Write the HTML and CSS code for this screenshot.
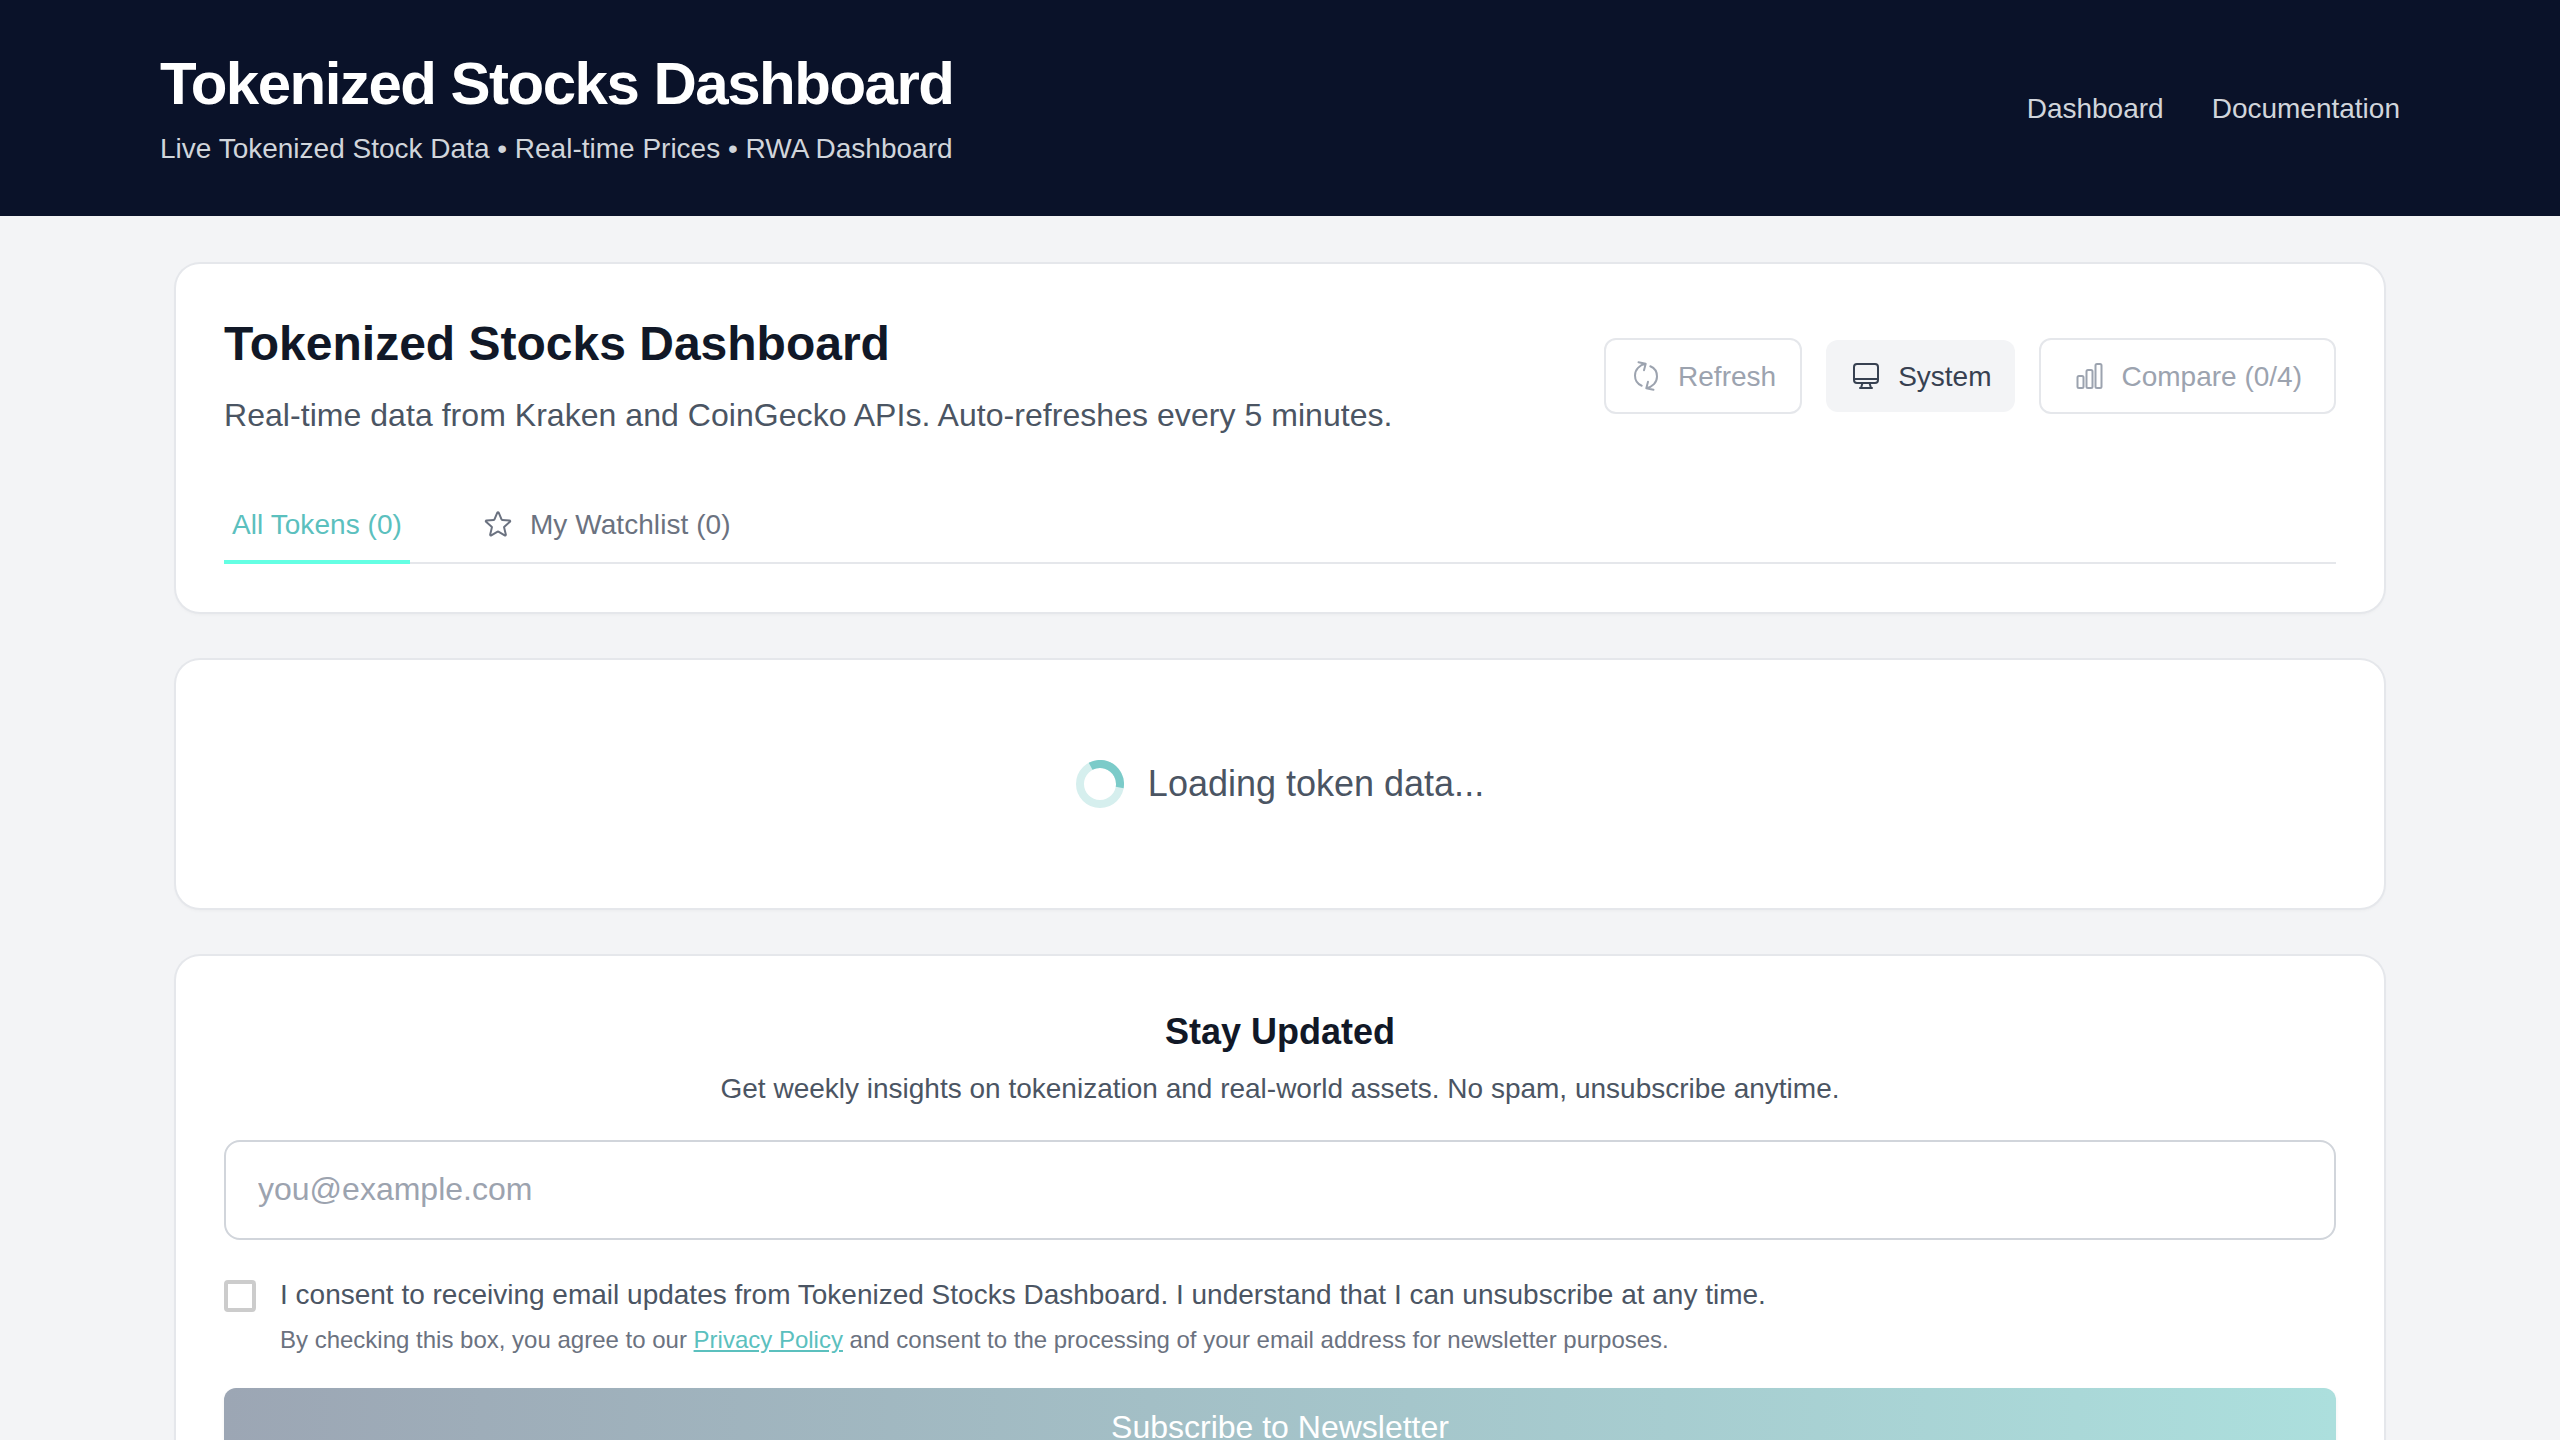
FILE: index.html
```html
<!DOCTYPE html>
<html lang="en">
<head>
<meta charset="utf-8">
<title>Tokenized Stocks Dashboard</title>
<link rel="stylesheet" href="styles.css">
</head>
<body>
<header class="site-header">
  <div class="site-header-inner">
    <div>
      <h1 class="site-title">Tokenized Stocks Dashboard</h1>
      <p class="site-tagline">Live Tokenized Stock Data • Real-time Prices • RWA Dashboard</p>
    </div>
    <nav class="site-nav">
      <a href="#">Dashboard</a>
      <a href="#">Documentation</a>
    </nav>
  </div>
</header>
<main class="main">
  <section class="card">
    <div class="intro">
      <div>
        <h2 class="intro-title">Tokenized Stocks Dashboard</h2>
        <p class="intro-text">Real-time data from Kraken and CoinGecko APIs. Auto-refreshes every 5 minutes.</p>
      </div>
      <div class="actions">
        <button class="btn btn-outline" disabled>
          <svg class="icon" viewBox="0 0 32 32"><path d="M11.7 25.7C7.5 24 5 20 5 15.5 5 9.5 9.500 5 15.700 3.800M8.500 2.300l7.200 1.500-1.700 6.500M20.300 6.300C24.500 8 27 12 27 16.500 27 22.500 22.500 27 16.300 28.200M23.500 29.700l-7.200-1.500 1.700-6.500"/></svg>
          <span class="label">Refresh</span>
        </button>
        <button class="btn btn-solid">
          <svg class="icon" viewBox="0 0 32 32"><rect x="4" y="4" width="24" height="19" rx="3"/><path d="M4 19h24M12.500 23l-1.500 5M19.500 23l1.500 5M10 28h12"/></svg>
          <span class="label">System</span>
        </button>
        <button class="btn btn-outline btn-wide" disabled>
          <svg class="icon" viewBox="0 0 32 32"><rect x="4.500" y="16" width="6" height="12" rx="1.500"/><rect x="13.500" y="10" width="6" height="18" rx="1.500"/><rect x="22.500" y="4" width="6" height="24" rx="1.500"/></svg>
          <span class="label">Compare (0/4)</span>
        </button>
      </div>
    </div>
    <div class="tabs">
      <a class="tab tab-active" href="#"><span class="label">All Tokens (0)</span></a>
      <a class="tab" href="#">
        <svg class="icon" viewBox="0 0 24 24"><path d="M11.48 3.499a.562.562 0 0 1 1.04 0l2.125 5.111a.563.563 0 0 0 .475.345l5.518.442c.499.04.701.663.321.988l-4.204 3.602a.563.563 0 0 0-.182.557l1.285 5.385a.562.562 0 0 1-.84.61l-4.725-2.885a.562.562 0 0 0-.586 0L6.982 20.54a.562.562 0 0 1-.84-.61l1.285-5.386a.562.562 0 0 0-.182-.557l-4.204-3.602a.562.562 0 0 1 .321-.988l5.518-.442a.563.563 0 0 0 .475-.345L11.48 3.5Z"/></svg>
        <span class="label">My Watchlist (0)</span>
      </a>
    </div>
  </section>

  <section class="card loading">
    <svg class="spinner" viewBox="0 0 48 48"><circle class="spinner-track" cx="24" cy="24" r="20"/><circle class="spinner-arc" cx="24" cy="24" r="20" pathLength="360" transform="rotate(-118 24 24)"/></svg>
    <span>Loading token data...</span>
  </section>

  <section class="card">
    <h3 class="news-title">Stay Updated</h3>
    <p class="news-text">Get weekly insights on tokenization and real-world assets. No spam, unsubscribe anytime.</p>
    <form>
      <input class="email" type="email" placeholder="you@example.com">
      <div class="consent">
        <span class="checkbox" role="checkbox" aria-checked="false" tabindex="0"></span>
        <div>
          <p class="consent-text">I consent to receiving email updates from Tokenized Stocks Dashboard. I understand that I can unsubscribe at any time.</p>
          <p class="consent-note">By checking this box, you agree to our <a href="#">Privacy Policy</a> and consent to the processing of your email address for newsletter purposes.</p>
        </div>
      </div>
      <button class="subscribe" disabled>Subscribe to Newsletter</button>
    </form>
  </section>
</main>
</body>
</html>
```
FILE: styles.css
```css
* { box-sizing: border-box; margin: 0; padding: 0; }
html { height: 100%; overflow: hidden; }
body {
  height: 1440px;
  overflow: hidden;
  background: #f3f4f6;
  color: #111827;
  font-family: "Liberation Sans", Arial, sans-serif;
  font-size: 28px;
  line-height: 40px;
}
a { color: inherit; text-decoration: none; }
button, input { font: inherit; }

.site-header { background: #0a1229; padding: 48px 160px; }
.site-header-inner { display: flex; align-items: center; justify-content: space-between; }
.site-title { color: #fff; font-size: 60px; line-height: 72px; letter-spacing: -0.025em; }
.site-tagline { margin: 9px 0 -1px; color: #d1d5db; }
.site-nav { display: flex; gap: 48px; padding-top: 2px; color: #d1d5db; }

.main { display: flex; flex-direction: column; gap: 48px; padding: 48px 176px; }
.card {
  padding: 48px;
  background: #fff;
  border-radius: 24px;
  box-shadow: 0 0 0 2px #e5e7eb, 0 2px 4px rgba(0, 0, 0, 0.05);
}

.intro { display: flex; align-items: center; justify-content: space-between; }
.intro-title { font-size: 48px; line-height: 64px; }
.intro-text { margin: 15px 0 1px; color: #4b5563; font-size: 32px; line-height: 48px; letter-spacing: 0.045px; }
.actions { display: flex; align-items: center; gap: 24px; }
.btn {
  display: flex;
  align-items: center;
  gap: 16px;
  padding: 16px 24px;
  border: 0;
  border-radius: 12px;
  white-space: nowrap;
}
.btn-outline { background: #fff; border: 2px solid #e5e7eb; color: #9ca3af; }
.btn-solid { background: #f3f4f6; color: #374151; }
.btn-wide { padding: 16px 32px; }
.label { padding-top: 2px; line-height: 38px; }
.icon {
  width: 32px;
  height: 32px;
  flex: none;
  fill: none;
  stroke: currentColor;
  stroke-width: 2;
  stroke-linecap: round;
  stroke-linejoin: round;
}

.tabs { display: flex; gap: 64px; margin-top: 48px; border-bottom: 2px solid #e5e7eb; }
.tab {
  display: flex;
  align-items: center;
  gap: 16px;
  margin-bottom: -2px;
  padding: 16px 8px;
  border-bottom: 4px solid transparent;
  color: #6b7280;
  letter-spacing: 0.06px;
}
.tab .icon { stroke-width: 1.5; }
.tab-active { border-bottom-color: #64ffe3; color: #5bc0be; }

.loading {
  display: flex;
  align-items: center;
  justify-content: center;
  gap: 24px;
  padding: 96px 48px;
  color: #4b5563;
  font-size: 36px;
  line-height: 56px;
}
.spinner { width: 48px; height: 48px; fill: none; stroke-width: 8; }
.spinner-track { stroke: #d6efee; }
.spinner-arc { stroke: #7bcbc9; stroke-dasharray: 128 232; }

.news-title { font-size: 36px; line-height: 56px; text-align: center; }
.news-text { margin: 9px 0 31px; color: #4b5563; text-align: center; }
.email {
  display: block;
  width: 100%;
  height: 100px;
  padding: 23px 32px 25px;
  background: #fff;
  border: 2px solid #d1d5db;
  border-radius: 16px;
  font-size: 32px;
}
.email::placeholder { color: #9ca3af; }
.consent { display: flex; gap: 24px; margin: 32px 0; }
.checkbox { flex: none; width: 32px; height: 32px; margin-top: 8px; border: 4px solid #ccc; border-radius: 4px; }
.consent-text { color: #4b5563; padding-top: 1px; line-height: 44px; }
.consent-note { margin-top: 7px; color: #6b7280; font-size: 24px; line-height: 32px; }
.consent-note a { color: #5bc0be; text-decoration: underline; }
.subscribe {
  display: block;
  width: 100%;
  height: 80px;
  padding-bottom: 2px;
  border: 0;
  border-radius: 12px;
  background: linear-gradient(to right, #9ca6b4, #acdfdd);
  box-shadow: 0 2px 4px rgba(0, 0, 0, 0.05);
  color: #fff;
  font-size: 32px;
}
```
